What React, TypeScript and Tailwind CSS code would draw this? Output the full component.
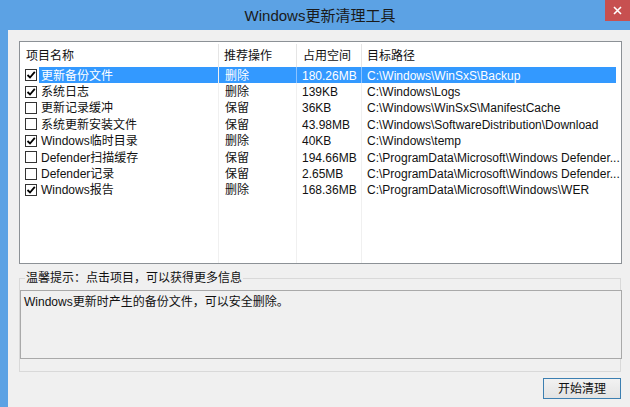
import React from "react";

type Row = { checked: boolean; name: string; op: string; size: string; path: string };

const rows: Row[] = [
  { checked: true, name: "更新备份文件", op: "删除", size: "180.26MB", path: "C:\\Windows\\WinSxS\\Backup" },
  { checked: true, name: "系统日志", op: "删除", size: "139KB", path: "C:\\Windows\\Logs" },
  { checked: false, name: "更新记录缓冲", op: "保留", size: "36KB", path: "C:\\Windows\\WinSxS\\ManifestCache" },
  { checked: false, name: "系统更新安装文件", op: "保留", size: "43.98MB", path: "C:\\Windows\\SoftwareDistribution\\Download" },
  { checked: true, name: "Windows临时目录", op: "删除", size: "40KB", path: "C:\\Windows\\temp" },
  { checked: false, name: "Defender扫描缓存", op: "保留", size: "194.66MB", path: "C:\\ProgramData\\Microsoft\\Windows Defender..." },
  { checked: false, name: "Defender记录", op: "保留", size: "2.65MB", path: "C:\\ProgramData\\Microsoft\\Windows Defender..." },
  { checked: true, name: "Windows报告", op: "删除", size: "168.36MB", path: "C:\\ProgramData\\Microsoft\\Windows\\WER" },
];

function CheckBox({ checked }: { checked: boolean }) {
  return (
    <div className="w-[12px] h-[12px] border border-[#333333] bg-white flex items-center justify-center shrink-0">
      {checked && (
        <svg width="10" height="10" viewBox="0 0 10 10">
          <path d="M1.5 5 L4 7.5 L8.8 1.8" fill="none" stroke="#000" strokeWidth="1.8" />
        </svg>
      )}
    </div>
  );
}

export default function App() {
  return (
    <div
      className="w-[630px] h-[407px] bg-[#5ca2e4] flex flex-col overflow-hidden text-[12px] text-[#111]"
      style={{ fontFamily: '"Liberation Sans", "Noto Sans CJK SC", sans-serif' }}
    >
      {/* title bar */}
      <div className="h-[30px] relative flex items-center justify-center pl-[10px] shrink-0">
        <span className="text-[15px] text-[#1a1a1a] leading-none">Windows更新清理工具</span>
        <div className="absolute top-0 right-0 w-[25px] h-[21px] bg-[#c75050] flex items-center justify-center">
          <svg width="9" height="9" viewBox="0 0 9 9">
            <path d="M1 1 L8 8 M8 1 L1 8" stroke="#fff" strokeWidth="1.6" />
          </svg>
        </div>
      </div>

      {/* body */}
      <div className="flex-1 ml-[8px] bg-[#f0f0f0] flex flex-col pl-[11px] pr-[8px] pt-[11px]">
        {/* list */}
        <div className="h-[223px] border border-[#8c9196] bg-white flex flex-col shrink-0">
          {/* header */}
          <div className="h-[25px] flex items-center shrink-0 pt-[2px]">
            <div className="w-[199px] pl-[6px] h-full flex items-center border-r border-[#e5e5e5]">项目名称</div>
            <div className="w-[78px] pl-[5px] h-full flex items-center border-r border-[#e5e5e5]">推荐操作</div>
            <div className="w-[65px] pl-[6px] h-full flex items-center border-r border-[#e5e5e5]">占用空间</div>
            <div className="w-[254px] pl-[5px] h-full flex items-center">目标路径</div>
          </div>
          {/* body with column guides */}
          <div className="flex-1 flex flex-col">
            {rows.map((r, i) => {
              const sel = i === 0;
              return (
                <div key={i} className="h-[16.4px] flex items-center shrink-0 leading-none">
                  <div className="w-[199px] h-full flex items-center pl-[5px] border-r border-[#f0f0f0]">
                    <CheckBox checked={r.checked} />
                    <div
                      className={
                        sel
                          ? "ml-[2px] h-full flex-1 flex items-center pl-[2px] pt-[1px] bg-[#3399ff] text-white"
                          : "ml-[2px] h-full flex-1 flex items-center pl-[2px] pt-[1px]"
                      }
                    >
                      {r.name}
                    </div>
                  </div>
                  <div
                    className={
                      sel
                        ? "w-[78px] h-full flex items-center pl-[6px] pt-[1px] bg-[#3399ff] text-white border-r border-[#8cc3ff]"
                        : "w-[78px] h-full flex items-center pl-[6px] pt-[1px] border-r border-[#f0f0f0]"
                    }
                  >
                    {r.op}
                  </div>
                  <div
                    className={
                      sel
                        ? "w-[65px] h-full flex items-center pl-[5px] pt-[1px] bg-[#3399ff] text-white border-r border-[#8cc3ff]"
                        : "w-[65px] h-full flex items-center pl-[5px] pt-[1px] border-r border-[#f0f0f0]"
                    }
                  >
                    {r.size}
                  </div>
                  <div
                    className={
                      sel
                        ? "w-[254px] h-full flex items-center pl-[5px] pt-[1px] bg-[#3399ff] text-white whitespace-nowrap"
                        : "w-[254px] h-full flex items-center pl-[5px] pt-[1px] whitespace-nowrap"
                    }
                  >
                    {r.path}
                  </div>
                </div>
              );
            })}
            <div className="flex-1 flex">
              <div className="w-[199px] border-r border-[#f0f0f0]" />
              <div className="w-[78px] border-r border-[#f0f0f0]" />
              <div className="w-[65px] border-r border-[#f0f0f0]" />
            </div>
          </div>
        </div>

        {/* group box */}
        <fieldset className="mt-[6px] border border-[#d9d9d9] pb-[12px] px-0 mr-[1px] min-w-0">
          <legend className="ml-[5px] px-[1px] leading-[16px] text-[#111]">温馨提示：点击项目，可以获得更多信息</legend>
          <div className="mt-[4px] h-[69px] -mr-[2px] border border-[#a9a9a9] bg-[#f0f0f0] px-[3px] pt-[3px] leading-[16px]">
            Windows更新时产生的备份文件，可以安全删除。
          </div>
        </fieldset>

        {/* button */}
        <div className="flex justify-end mt-[6px] pr-[1px]">
          <button className="w-[78px] h-[21px] border border-[#3c7fb1] bg-gradient-to-b from-[#f2f2f2] to-[#e3e3e3] flex items-center justify-center leading-none text-[12px] text-[#111]">
            开始清理
          </button>
        </div>
      </div>
    </div>
  );
}
